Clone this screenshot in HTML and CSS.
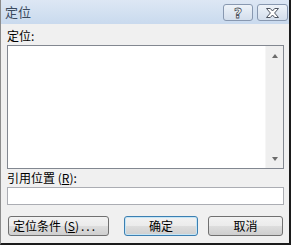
FILE: index.html
```html
<!DOCTYPE html>
<html lang="zh-CN">
<head>
    <meta charset="UTF-8">
    <title>定位</title>
    <link rel="stylesheet" href="styles.css">
</head>
<body>
    <div class="window">
        <div class="titlebar">
            <span class="title">定位</span>
            <div class="caption-btns">
                <div class="cap-btn help"><span>?</span></div>
                <div class="cap-btn close">
                    <svg width="17" height="12" viewBox="0 0 17 12">
                        <path d="M2.5 1.5 H6.3 L8.5 4 L10.7 1.5 H14.5 L10.6 6 L14.5 10.5 H10.7 L8.5 8 L6.3 10.5 H2.5 L6.4 6 Z" fill="#fff" stroke="#4d5460" stroke-width="1" stroke-linejoin="round"/>
                    </svg>
                </div>
            </div>
        </div>
        <div class="content">
            <div class="label first">定位:</div>
            <div class="listbox">
                <div class="list-area"></div>
                <div class="scrollbar">
                    <span class="arrow up"></span>
                    <span class="arrow down"></span>
                </div>
            </div>
            <div class="label">引用位置 (<u>R</u>):</div>
            <div class="textbox"></div>
            <div class="buttons">
                <div class="btn special">定位条件 (<u>S</u>)<span class="dots">...</span></div>
                <div class="btn ok">确定</div>
                <div class="btn cancel">取消</div>
            </div>
        </div>
    </div>
</body>
</html>
```

FILE: styles.css
```css
body {
    margin: 0;
    font-family: "Noto Sans CJK SC", "Liberation Sans", sans-serif;
    font-size: 12px;
    color: #000;
}
.window {
    width: 291px;
    height: 245px;
    box-sizing: border-box;
    background: #f0f0f0;
    border-left: 1px solid #8c8c8c;
    border-right: 2px solid #1b1b1b;
    border-bottom: 2px solid #1b1b1b;
}
.titlebar {
    height: 24px;
    display: flex;
    align-items: flex-start;
    justify-content: space-between;
    background: linear-gradient(#dde7f4, #c9daee);
}
.title {
    margin: 4px 0 0 4px;
    font-size: 13px;
    line-height: 16px;
    color: #3b4a5e;
}
.caption-btns {
    display: flex;
    gap: 4px;
    margin: 4px 1px 0 0;
}
.cap-btn {
    height: 17px;
    box-sizing: border-box;
    border: 1px solid #8898b0;
    border-radius: 3px;
    background: linear-gradient(#eef3f9, #d3deec);
    display: flex;
    align-items: center;
    justify-content: center;
}
.help {
    width: 30px;
}
.close {
    width: 31px;
}
.help span {
    font-family: "DejaVu Sans", sans-serif;
    font-weight: bold;
    font-size: 14px;
    line-height: 14px;
    color: #fff;
    -webkit-text-stroke: 0.8px #4d5460;
}
.content {
    padding: 0 5px 0 6px;
}
.label {
    height: 15px;
    line-height: 15px;
    margin-top: 1px;
}
.label.first {
    margin-top: 4px;
    margin-bottom: 2px;
}
.label u {
    text-decoration: underline;
}
.listbox {
    height: 124px;
    box-sizing: border-box;
    border: 1px solid #828790;
    display: flex;
    background: #fff;
}
.list-area {
    flex: 1;
}
.scrollbar {
    width: 17px;
    background: #efefef;
    border-left: 1px solid #f6f6f6;
    display: flex;
    flex-direction: column;
    justify-content: space-between;
    align-items: center;
    padding: 8px 0 7px;
}
.arrow {
    width: 0;
    height: 0;
    border-left: 3.5px solid transparent;
    border-right: 3.5px solid transparent;
}
.arrow.up {
    border-bottom: 4px solid #6b6b6b;
}
.arrow.down {
    border-top: 4px solid #6b6b6b;
}
.textbox {
    height: 18px;
    box-sizing: border-box;
    border: 1px solid #abadb3;
    background: #fff;
    margin-top: 2px;
}
.buttons {
    display: flex;
    margin-top: 11px;
    padding-left: 1px;
}
.btn {
    height: 20px;
    box-sizing: border-box;
    border: 1px solid #707070;
    border-radius: 3px;
    background: linear-gradient(#f2f2f2 0%, #ebebeb 50%, #dddddd 50%, #cfcfcf 100%);
    display: flex;
    align-items: center;
    justify-content: center;
    line-height: 14px;
}
.btn.special {
    width: 101px;
    justify-content: flex-start;
    padding-left: 4px;
}
.dots {
    letter-spacing: 2px;
    margin-left: 2px;
}
.btn.ok {
    width: 74px;
    margin-left: 15px;
    border-color: #3c7fb1;
    box-shadow: inset 0 0 0 1px #c4e5f6;
}
.btn.cancel {
    width: 75px;
    margin-left: 10px;
}
```
